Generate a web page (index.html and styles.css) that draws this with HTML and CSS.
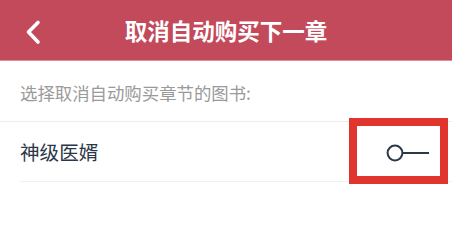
FILE: index.html
```html
<!DOCTYPE html>
<html lang="zh">
<head>
<meta charset="utf-8">
<link rel="stylesheet" href="styles.css">
</head>
<body>
<div class="page">
  <header class="topbar">
    <svg class="back" width="20" height="30" viewBox="0 0 20 30">
      <polyline points="13,5.5 3.5,15 13,25" fill="none" stroke="#fff" stroke-width="3.6" stroke-linecap="round" stroke-linejoin="round"/>
    </svg>
    <h1 class="title">取消自动购买下一章</h1>
  </header>
  <div class="hint">选择取消自动购买章节的图书:</div>
  <div class="list">
    <div class="row">
      <span class="book">神级医婿</span>
      <span class="switch-wrap">
        <svg class="switch" width="44" height="20" viewBox="0 0 44 20">
          <circle cx="9" cy="10" r="7.4" fill="#fff" stroke="#2b3a4b" stroke-width="2"/>
          <line x1="16.4" y1="10" x2="43" y2="10" stroke="#2b3a4b" stroke-width="2"/>
        </svg>
        <span class="highlight"></span>
      </span>
    </div>
  </div>
</div>
</body>
</html>
```
FILE: styles.css
```css
html, body {
  margin: 0;
  padding: 0;
  background: #fff;
}
.page {
  width: 452px;
  height: 225px;
  font-family: "Noto Sans CJK SC", "Noto Sans", sans-serif;
  overflow: hidden;
}
.topbar {
  position: relative;
  height: 60px;
  background: #c24a5b;
  border-bottom: 1px solid #de8d98;
  display: flex;
  align-items: center;
  justify-content: center;
}
.back {
  position: absolute;
  left: 25px;
  top: 17px;
}
.title {
  margin: 0;
  color: #fff;
  font-size: 22.5px;
  font-weight: 700;
  line-height: 1;
}
.hint {
  height: 61px;
  box-sizing: border-box;
  padding-left: 20px;
  display: flex;
  align-items: center;
  font-size: 17.4px;
  color: #9a9a9a;
  border-bottom: 1px solid #ececec;
  padding-top: 2px;
}
.list {
  padding-left: 20px;
}
.row {
  height: 60px;
  box-sizing: border-box;
  border-bottom: 1px solid #f0f0f0;
  display: flex;
  align-items: center;
  justify-content: space-between;
  padding-right: 22px;
}
.book {
  font-size: 19.6px;
  color: #2b3747;
}
.switch-wrap {
  position: relative;
  display: flex;
  align-items: center;
  margin-top: 2px;
}
.highlight {
  position: absolute;
  left: -37px;
  top: -25px;
  width: 99px;
  height: 66px;
  box-sizing: border-box;
  border: 8px solid #e2342f;
}
```
